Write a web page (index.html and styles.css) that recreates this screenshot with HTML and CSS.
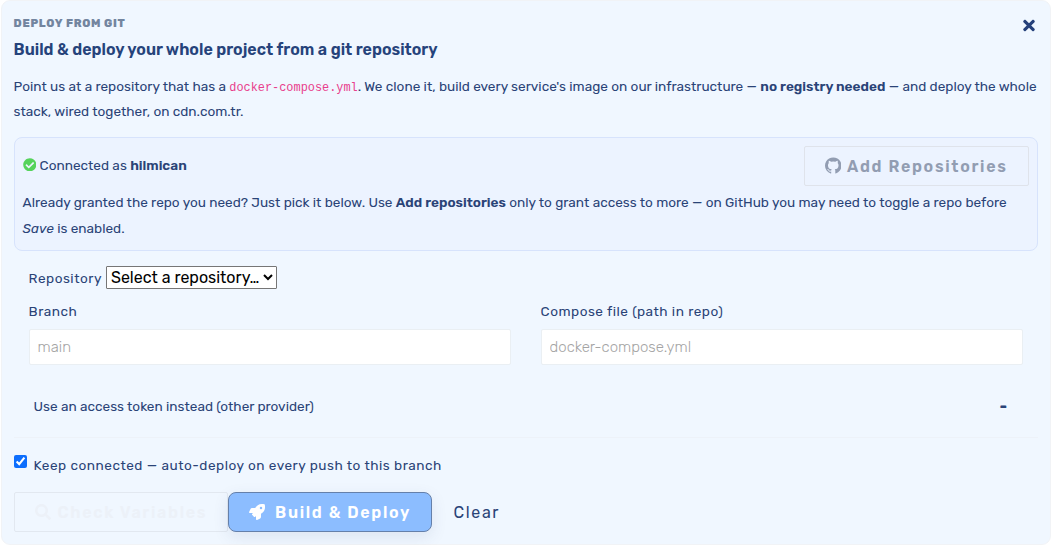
FILE: index.html
```html
<!DOCTYPE html>
<html lang="en">
<head>
<meta charset="utf-8">
<title>Deploy from git</title>
<link rel="stylesheet" href="styles.css">
</head>
<body>
<main class="card">
  <header class="header">
    <div>
      <div class="eyebrow">DEPLOY FROM GIT</div>
      <h1 class="title">Build &amp; deploy your whole project from a git repository</h1>
    </div>
    <button class="close" aria-label="Close"><svg viewBox="0 0 352 512"><path d="M242.72 256l100.07-100.07c12.28-12.28 12.28-32.19 0-44.48l-22.24-22.24c-12.28-12.28-32.19-12.28-44.48 0L176 189.28 75.93 89.21c-12.28-12.28-32.19-12.28-44.48 0L9.21 111.45c-12.28 12.28-12.28 32.19 0 44.48L109.28 256 9.21 356.07c-12.28 12.28-12.28 32.19 0 44.48l22.24 22.24c12.28 12.28 32.2 12.28 44.48 0L176 322.72l100.07 100.07c12.28 12.28 32.2 12.28 44.48 0l22.24-22.24c12.28-12.28 12.28-32.19 0-44.48L242.72 256z"/></svg></button>
  </header>
  <p class="intro">Point us at a repository that has a <code>docker-compose.yml</code>. We clone it, build every service's image on our infrastructure — <b>no registry needed</b> — and deploy the whole stack, wired together, on cdn.com.tr.</p>

  <section class="connection">
    <div class="connection-top">
      <div class="status"><svg viewBox="0 0 512 512"><path d="M504 256c0 136.967-111.033 248-248 248S8 392.967 8 256 119.033 8 256 8s248 111.033 248 248zM227.314 387.314l184-184c6.248-6.248 6.248-16.379 0-22.627l-22.627-22.627c-6.248-6.249-16.379-6.249-22.628 0L216 308.118l-70.059-70.059c-6.248-6.248-16.379-6.248-22.628 0l-22.627 22.627c-6.248 6.248-6.248 16.379 0 22.627l104 104c6.249 6.249 16.379 6.249 22.628.001z"/></svg><span>Connected as <b>hilmican</b></span></div>
      <button class="btn add"><svg viewBox="0 128 1536 1504"><path d="M768 128q209 0 385.500 103t279.500 279.500 103 385.500q0 251-146.500 451.500t-378.500 277.500q-27 5-40-7t-13-30q0-3 .5-76.500t.5-134.500q0-97-52-142 57-6 102.500-18t94-39 81-66.500 53-105 20.500-150.500q0-119-79-206 37-91-8-204-28-9-81 11t-92 44l-38 24q-93-26-192-26t-192 26q-16-11-42.500-27t-83.500-38.500-85-13.500q-45 113-8 204-79 87-79 206 0 85 20.500 150t52.500 105 80.500 67 94 39 102.500 18q-39 36-49 103-21 10-45 15t-57 5-65.500-21.500-55.500-62.500q-19-32-48.500-52t-49.500-24l-20-3q-21 0-29 4.500t-5 11.500 9 14 13 12l7 5q22 10 43.500 38t31.500 51l10 23q13 38 44 61.500t67 30 69.500 7 55.500-3.500l23-4q0 38 .5 88.500t.5 54.500q0 18-13 30t-40 7q-232-77-378.500-277.500t-146.500-451.500q0-209 103-385.500t279.500-279.500 385.500-103z"/></svg><span>Add Repositories</span></button>
    </div>
    <p class="note">Already granted the repo you need? Just pick it below. Use <b>Add repositories</b> only to grant access to more — on GitHub you may need to toggle a repo before <i>Save</i> is enabled.</p>
  </section>

  <div class="fields">
    <label class="repo"><span>Repository</span><select><option>Select a repository…</option></select></label>
    <div class="columns">
      <label class="field"><span>Branch</span><input placeholder="main"></label>
      <label class="field"><span>Compose file (path in repo)</span><input placeholder="docker-compose.yml"></label>
    </div>
  </div>

  <div class="token"><span>Use an access token instead (other provider)</span><span class="dash">-</span></div>

  <label class="keep"><input type="checkbox" checked><span>Keep connected — auto-deploy on every push to this branch</span></label>

  <footer class="actions">
    <button class="btn check"><svg viewBox="0 0 512 512"><path d="M505 442.7L405.300 343c-4.500-4.500-10.600-7-17-7H372c27.600-35.300 44-79.700 44-128C416 93.100 322.900 0 208 0S0 93.100 0 208s93.100 208 208 208c48.300 0 92.700-16.400 128-44v16.300c0 6.400 2.500 12.500 7 17l99.700 99.700c9.400 9.400 24.600 9.400 33.900 0l28.300-28.300c9.400-9.400 9.400-24.600.1-34zM208 336c-70.700 0-128-57.200-128-128 0-70.700 57.200-128 128-128 70.700 0 128 57.200 128 128 0 70.700-57.200 128-128 128z"/></svg><span>Check Variables</span></button>
    <button class="btn build"><svg viewBox="0 0 512 512"><path d="M505.120 19.090c-1.190-5.500-6.660-11-12.070-12.150C460.720 0 435.420 0 410.220 0 306.680 0 244.560 55.380 198.200 128H94.880c-16.300 0-35.600 11.900-42.900 26.500L2.530 253.290A28.400 28.400 0 0 0 0 264a24 24 0 0 0 24 24h103.850l-22.470 22.470a32 32 0 0 0 0 45.250l50.900 50.910a32 32 0 0 0 45.260 0L224 384.160V488a24 24 0 0 0 24 24 28.500 28.500 0 0 0 10.700-2.530l98.700-49.390c14.600-7.300 26.500-26.580 26.500-42.890V313.790C456.300 267.350 512 205.040 512 101.990c.1-25.290.1-50.590-6.880-82.900zM384 168a40 40 0 1 1 0-80 40 40 0 0 1 0 80z"/></svg><span>Build &amp; Deploy</span></button>
    <button class="clear">Clear</button>
  </footer>
</main>
</body>
</html>
```
FILE: styles.css
```css
* { box-sizing: border-box; }
body { margin: 0; background: #fff; color: #2a4377; font: 13.6px/25px Rubik, Roboto, sans-serif; }
p, h1 { margin: 0; }
button { font: inherit; color: inherit; background: none; border: 0; padding: 0; }
svg { fill: currentColor; display: block; flex: none; }
b { font-weight: 600; }
.card { width: 1050px; height: 545px; margin-left: .6px; padding: 12px 12px 0; border: 1px solid #f1f3f6; border-radius: 9px; background: #f0f7ff; display: flex; flex-direction: column; }
.header { display: flex; justify-content: space-between; height: 61px; }
.eyebrow { font-size: 11.2px; line-height: 21px; font-weight: 800; color: #73859f; letter-spacing: .7px; }
.title { font-size: 16px; line-height: 32px; font-weight: 600; color: #26437b; }
.close { align-self: flex-start; padding: 4px 2.5px 0 0; color: #25407a; }
.close svg { width: 12px; height: 17px; }
.intro { height: 63px; flex: none; }
.intro code { font: 11.9px/1 "Liberation Mono", monospace; color: #e83e8c; }
.connection { height: 114px; padding: 8px; border: 1px solid #d7e3fc; border-radius: 8px; background: #ecf3ff; }
.connection-top { display: flex; justify-content: space-between; height: 43px; }
.status { display: flex; align-items: center; height: 38px; }
.status svg { width: 13.6px; height: 13.6px; margin: -1px 3.4px 0 0; color: #55d35b; }
.note { line-height: 26px; }
.btn { height: 40px; display: flex; align-items: center; border: 1px solid #dfe3eb; border-radius: 2px; font-size: 16px; font-weight: 600; letter-spacing: 1.68px; padding-left: 20px; }
.btn svg { width: 16px; height: 16px; }
.add { width: 225px; color: #929db2; gap: 6px; }
.btn.add svg { width: 16.5px; height: 17px; margin-top: -1px; }
.fields { padding: 15px 15px 0; height: 128px; }
.repo { display: flex; align-items: flex-start; gap: 4px; height: 24px; letter-spacing: .5px; }
.repo select { width: 171px; height: 23px; margin: 0; padding: 0; font: 16px Rubik, Roboto, sans-serif; color: #000; background: #fff; border: 1px solid #767676; border-radius: 1px; }
.columns { display: grid; grid-template-columns: 482px 482px; gap: 30px; margin-top: 9px; }
.field { display: flex; flex-direction: column; gap: 5px; letter-spacing: .5px; }
.field input { height: 36px; padding: 0 8px; border: 1px solid #eaeff3; border-radius: 2px; background: #fff; font: 300 15px Rubik, Roboto, sans-serif; }
.field input::placeholder { color: #a4a4a4; }
.token { height: 59px; border-bottom: 1px solid #edf2f9; padding: 15px 30.5px 0 20px; display: flex; justify-content: space-between; }
.dash { font-size: 16px; font-weight: 700; }
.keep { display: flex; height: 54px; padding-top: 15px; gap: 7px; letter-spacing: .5px; }
.keep input { width: 13px; height: 13px; margin: 2px 0 0; accent-color: #0d6efd; }
.actions { display: flex; }
.check { width: 214px; color: #ecf1f8; border-color: #e2e8f0; gap: 7px; }
.build { width: 204px; color: #fff; background: #8cbdff; border: 1px solid #6580aa; border-radius: 8px; gap: 10.5px; box-shadow: 0 5px 16px rgba(50, 70, 120, .10); }
.clear { padding-left: 22px; font-size: 16px; font-weight: 400; letter-spacing: 1.6px; }
```
